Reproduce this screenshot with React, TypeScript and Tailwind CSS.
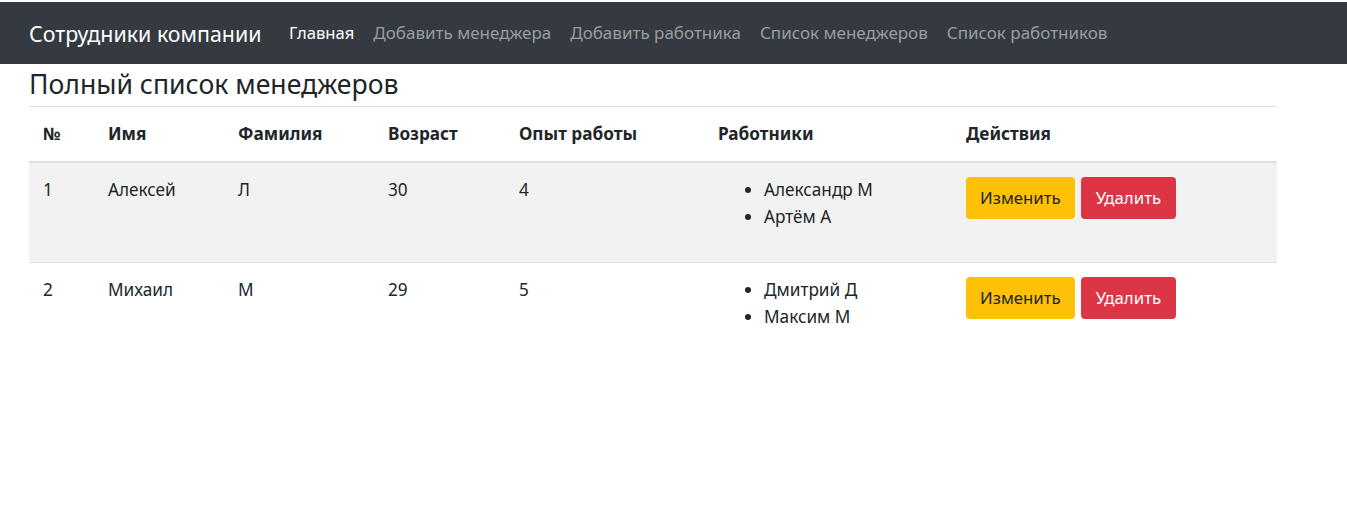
type Manager = {
  id: number;
  firstName: string;
  lastName: string;
  age: number;
  experience: number;
  workers: string[];
};

const managers: Manager[] = [
  { id: 1, firstName: "Алексей", lastName: "Л", age: 30, experience: 4, workers: ["Александр М", "Артём А"] },
  { id: 2, firstName: "Михаил", lastName: "М", age: 29, experience: 5, workers: ["Дмитрий Д", "Максим М"] },
];

const links = ["Добавить менеджера", "Добавить работника", "Список менеджеров", "Список работников"];

const font = { fontFamily: '"Noto Sans", "Open Sans", sans-serif' };

function Navbar() {
  return (
    <nav className="mt-[2px] flex h-[62px] items-center bg-[#343a40] pl-[29px]">
      <a className="mr-[18px] text-[21.4px] leading-[33px] text-white">Сотрудники компании</a>
      <ul className="flex items-center">
        <li className="px-[9.5px] text-[16.6px] leading-[26px] text-white">Главная</li>
        {links.map((l) => (
          <li key={l} className="px-[9.5px] text-[17px] leading-[26px] text-[#9a9da0]">
            {l}
          </li>
        ))}
      </ul>
    </nav>
  );
}

function ManagersTable() {
  return (
    <table className="w-[1248px] table-fixed border-collapse text-left text-[17.2px] leading-[26.4px] text-[#212529]">
      <colgroup>
        <col className="w-[65px]" />
        <col className="w-[130px]" />
        <col className="w-[150px]" />
        <col className="w-[131px]" />
        <col className="w-[199px]" />
        <col className="w-[248px]" />
        <col />
      </colgroup>
      <thead>
        <tr className="border-t border-b-2 border-t-[#dee2e6] border-b-[#dee2e6]">
          {["№", "Имя", "Фамилия", "Возраст", "Опыт работы", "Работники", "Действия"].map((h) => (
            <th key={h} className="px-[14px] py-[14px] align-bottom font-bold">
              {h}
            </th>
          ))}
        </tr>
      </thead>
      <tbody>
        {managers.map((m, i) => (
          <tr key={m.id} className={i % 2 === 0 ? "bg-[#f2f2f2]" : "border-t border-[#dee2e6]"}>
            <td className="px-[14px] py-[14px] align-top">{m.id}</td>
            <td className="px-[14px] py-[14px] align-top">{m.firstName}</td>
            <td className="px-[14px] py-[14px] align-top">{m.lastName}</td>
            <td className="px-[14px] py-[14px] align-top">{m.age}</td>
            <td className="px-[14px] py-[14px] align-top">{m.experience}</td>
            <td className="px-[14px] py-[14px] align-top">
              <ul className="mb-[18px] list-disc pl-[46px]">
                {m.workers.map((w) => (
                  <li key={w}>{w}</li>
                ))}
              </ul>
            </td>
            <td className="px-[14px] py-[14px] align-top">
              <div className="flex gap-[6px]">
                <button className="h-[42px] rounded-[4px] bg-[#ffc107] px-[14px] text-[16.8px] text-[#212529]">
                  Изменить
                </button>
                <button className="h-[42px] rounded-[4px] bg-[#dc3545] px-[15px] text-[16.8px] text-white">
                  Удалить
                </button>
              </div>
            </td>
          </tr>
        ))}
      </tbody>
    </table>
  );
}

export default function App() {
  return (
    <div className="min-h-[525px] bg-white" style={font}>
      <Navbar />
      <div className="pl-[29px]">
        <h3 className="mt-[2px] mb-[3px] text-[26.6px] leading-[37px] font-normal text-[#212529]">
          Полный список менеджеров
        </h3>
        <ManagersTable />
      </div>
    </div>
  );
}
